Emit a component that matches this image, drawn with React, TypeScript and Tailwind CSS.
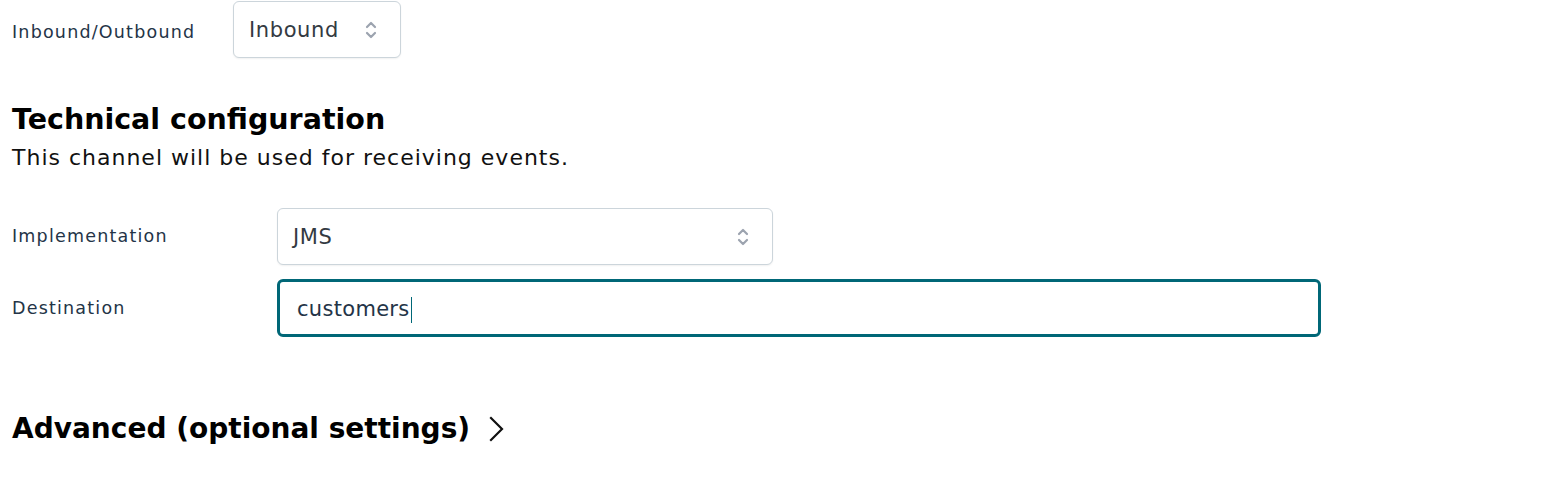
function UpDown() {
  return (
    <svg width="14" height="22" viewBox="0 0 14 22" fill="none" stroke="#9ca3af" strokeWidth="2.2" strokeLinecap="round" strokeLinejoin="round">
      <path d="M3 8l4-4 4 4" />
      <path d="M3 14l4 4 4-4" />
    </svg>
  );
}

function SelectBox({ value, className }: { value: string; className: string }) {
  return (
    <div className={`flex items-center justify-between h-[57px] rounded-md border border-[#ccd5db] bg-white pl-[15px] pr-[22px] shadow-[0_1px_2px_rgba(0,0,0,0.06)] ${className}`}>
      <span className="pt-[3px] text-[21px] tracking-[0.6px] text-[#333a42]">{value}</span>
      <UpDown />
    </div>
  );
}

export default function App() {
  return (
    <div className="bg-white w-[1566px] h-[490px] overflow-hidden px-3 font-['DejaVu_Sans',sans-serif]">
      <div className="flex items-center">
        <label className="w-[221px] text-[17.5px] tracking-[1.2px] text-[#243447] pt-[6px]">Inbound/Outbound</label>
        <SelectBox value="Inbound" className="w-[168px] mt-[1px]" />
      </div>

      <h2 className="mt-[44px] text-[28.5px] font-bold text-black leading-[36px]">Technical configuration</h2>
      <p className="mt-[6px] text-[22px] tracking-[1px] text-[#111] leading-[28px]">This channel will be used for receiving events.</p>

      <div className="mt-[36px] flex items-center">
        <label className="w-[265px] text-[17.5px] tracking-[1.2px] text-[#243447]">Implementation</label>
        <SelectBox value="JMS" className="w-[496px]" />
      </div>

      <div className="mt-[14px] flex items-center">
        <label className="w-[265px] text-[17.5px] tracking-[1.2px] text-[#243447]">Destination</label>
        <div className="flex items-center w-[1044px] h-[58px] rounded-md border-[3px] border-[#006777] bg-white px-[17px] pt-[4px]">
          <span className="text-[21px] tracking-[0.3px] text-[#243447]">customers</span>
          <span className="ml-[1px] w-[1px] h-[26px] bg-[#006777]" />
        </div>
      </div>

      <button className="mt-[71px] flex items-center gap-[18px] text-[28px] font-bold text-black">
        Advanced (optional settings)
        <svg width="18" height="28" viewBox="0 0 18 28" fill="none" stroke="#111" strokeWidth="2.2" strokeLinecap="square">
          <path d="M3 3l11 11-11 11" />
        </svg>
      </button>
    </div>
  );
}
